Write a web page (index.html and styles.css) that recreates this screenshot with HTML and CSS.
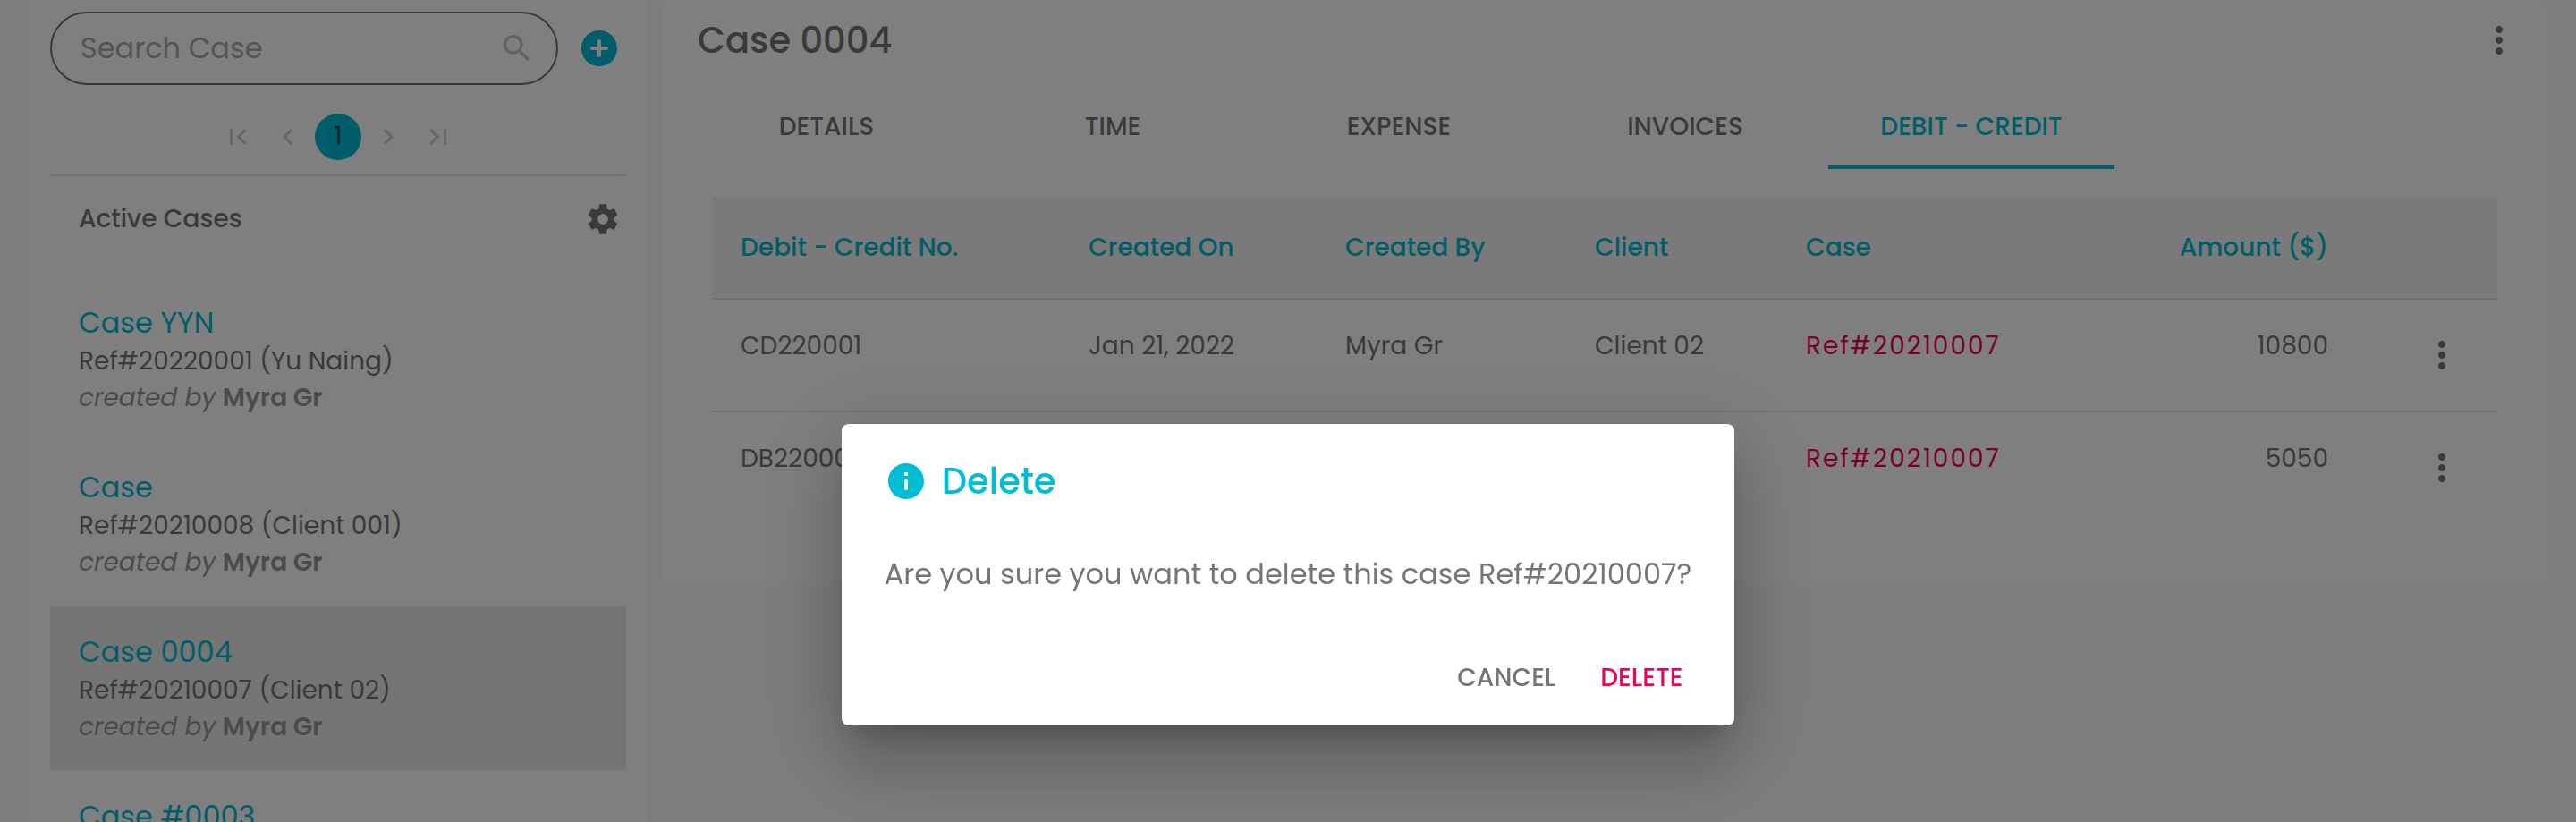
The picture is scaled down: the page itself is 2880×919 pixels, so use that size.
FILE: index.html
```html
<!DOCTYPE html>
<html lang="en">
<head>
<meta charset="utf-8">
<title>Case 0004</title>
<link rel="stylesheet" href="styles.css">
</head>
<body>
<svg class="sprite" aria-hidden="true">
  <symbol id="more" viewBox="0 0 24 24"><path d="M12 8c1.100 0 2-.9 2-2s-.9-2-2-2-2 .9-2 2 .9 2 2 2zm0 2c-1.100 0-2 .9-2 2s.9 2 2 2 2-.9 2-2-.9-2-2-2zm0 6c-1.100 0-2 .9-2 2s.9 2 2 2 2-.9 2-2-.9-2-2-2z"/></symbol>
</svg>
<div class="app">
  <aside class="sidebar">
    <div class="search-row">
      <div class="search">
        <input class="search-input" type="text" placeholder="Search Case" aria-label="Search Case">
        <svg class="icon-m" viewBox="0 0 24 24"><path d="M15.500 14h-.79l-.28-.27c1.200-1.400 1.820-3.310 1.480-5.340-.47-2.780-2.790-5-5.590-5.340-4.230-.52-7.790 3.040-7.270 7.270.34 2.800 2.560 5.120 5.340 5.590 2.030.34 3.940-.28 5.340-1.480l.27.28v.79l4.250 4.250c.41.410 1.080.410 1.490 0 .41-.41.410-1.080 0-1.490L15.500 14zm-6 0C7.010 14 5 11.990 5 9.500S7.010 5 9.500 5 14 7.010 14 9.500 11.990 14 9.500 14z"/></svg>
      </div>
      <button class="icon-button add" aria-label="Add case"><svg class="icon-l" viewBox="0 0 24 24"><path d="M12 2C6.480 2 2 6.480 2 12s4.480 10 10 10 10-4.480 10-10S17.520 2 12 2zm4 11h-3v3c0 .55-.45 1-1 1s-1-.45-1-1v-3H8c-.55 0-1-.45-1-1s.45-1 1-1h3V8c0-.55.45-1 1-1s1 .45 1 1v3h3c.55 0 1 .45 1 1s-.45 1-1 1z"/></svg></button>
    </div>
    <nav class="pagination" aria-label="Pages">
      <button class="page" disabled aria-label="First"><svg class="icon-s" viewBox="0 0 24 24"><path d="M18.410 16.590L13.820 12l4.590-4.590L17 6l-6 6 6 6zM6 6h2v12H6z"/></svg></button>
      <button class="page" disabled aria-label="Previous"><svg class="icon-s" viewBox="0 0 24 24"><path d="M15.410 7.410L14 6l-6 6 6 6 1.410-1.410L10.830 12z"/></svg></button>
      <button class="page current">1</button>
      <button class="page" disabled aria-label="Next"><svg class="icon-s" viewBox="0 0 24 24"><path d="M10 6L8.590 7.410 13.170 12l-4.580 4.590L10 18l6-6z"/></svg></button>
      <button class="page" disabled aria-label="Last"><svg class="icon-s" viewBox="0 0 24 24"><path d="M5.590 7.410L10.180 12l-4.590 4.590L7 18l6-6-6-6zM16 6h2v12h-2z"/></svg></button>
    </nav>
    <div class="list-head">
      <h2 class="list-title">Active Cases</h2>
      <button class="icon-button" aria-label="Settings"><svg class="icon-m" viewBox="0 0 24 24"><path d="M19.440 12.990l-.01.020c.04-.33.080-.67.080-1.010 0-.34-.03-.66-.07-.99l.01.020 2.440-1.920-2.430-4.220-2.870 1.160.01.010c-.52-.4-1.090-.74-1.710-1h.01L14.440 2H9.570l-.44 3.070h.01c-.62.260-1.190.600-1.710 1l.01-.01-2.880-1.170-2.440 4.220 2.440 1.920.01-.02c-.04.330-.07.650-.07.990 0 .34.030.680.080 1.010l-.01-.02-2.100 1.650-.33.260 2.430 4.200 2.880-1.150-.02-.04c.53.410 1.100.750 1.730 1.010h-.03L9.580 22h4.850s.03-.18.060-.42l.38-2.650h-.01c.62-.26 1.200-.6 1.730-1.010l-.02.040 2.880 1.150 2.430-4.200s-.14-.12-.33-.26l-2.110-1.660zM12 15.500c-1.930 0-3.500-1.570-3.500-3.500s1.570-3.500 3.500-3.500 3.500 1.570 3.500 3.500-1.570 3.500-3.500 3.500z"/></svg></button>
    </div>
    <ul class="cases">
      <li class="case"><a class="case-name" href="#">Case YYN</a><p class="case-ref">Ref#20220001 (Yu Naing)</p><p class="case-by"><em>created by</em> <strong>Myra Gr</strong></p></li>
      <li class="case"><a class="case-name" href="#">Case</a><p class="case-ref">Ref#20210008 (Client 001)</p><p class="case-by"><em>created by</em> <strong>Myra Gr</strong></p></li>
      <li class="case selected"><a class="case-name" href="#">Case 0004</a><p class="case-ref">Ref#20210007 (Client 02)</p><p class="case-by"><em>created by</em> <strong>Myra Gr</strong></p></li>
      <li class="case"><a class="case-name" href="#">Case #0003</a></li>
    </ul>
  </aside>
  <main class="panel">
    <header class="panel-head">
      <h1 class="panel-title">Case 0004</h1>
      <button class="icon-button" aria-label="Case menu"><svg class="icon-l"><use href="#more"/></svg></button>
    </header>
    <div class="tabs" role="tablist">
      <button class="tab" role="tab">DETAILS</button>
      <button class="tab" role="tab">TIME</button>
      <button class="tab" role="tab">EXPENSE</button>
      <button class="tab" role="tab">INVOICES</button>
      <button class="tab active" role="tab" aria-selected="true">DEBIT - CREDIT</button>
    </div>
    <div class="table-wrap">
      <table class="table">
        <colgroup><col class="c-no"><col class="c-on"><col class="c-by"><col class="c-client"><col class="c-case"><col class="c-amount"><col class="c-menu"></colgroup>
        <thead>
          <tr><th>Debit - Credit No.</th><th>Created On</th><th>Created By</th><th>Client</th><th>Case</th><th class="num">Amount ($)</th><th></th></tr>
        </thead>
        <tbody>
          <tr><td>CD220001</td><td>Jan 21, 2022</td><td>Myra Gr</td><td>Client 02</td><td><a class="ref-link" href="#">Ref#20210007</a></td><td class="num">10800</td><td class="menu"><button class="icon-button row-menu" aria-label="Row menu"><svg class="icon-l"><use href="#more"/></svg></button></td></tr>
          <tr><td>DB220001</td><td>Jan 21, 2022</td><td>Myra Gr</td><td>Client 02</td><td><a class="ref-link" href="#">Ref#20210007</a></td><td class="num">5050</td><td class="menu"><button class="icon-button row-menu" aria-label="Row menu"><svg class="icon-l"><use href="#more"/></svg></button></td></tr>
        </tbody>
      </table>
    </div>
  </main>
</div>
<div class="overlay">
  <section class="dialog" role="dialog" aria-labelledby="dialog-title">
    <h2 class="dialog-title" id="dialog-title"><svg class="icon-l" viewBox="0 0 24 24"><path d="M12 2C6.480 2 2 6.480 2 12s4.480 10 10 10 10-4.480 10-10S17.520 2 12 2zm0 15c-.55 0-1-.45-1-1v-4c0-.55.45-1 1-1s1 .45 1 1v4c0 .55-.45 1-1 1zm1-8h-2V7h2v2z"/></svg>Delete</h2>
    <p class="dialog-text">Are you sure you want to delete this case Ref#20210007?</p>
    <div class="dialog-actions">
      <button class="text-button">CANCEL</button>
      <button class="text-button danger">DELETE</button>
    </div>
  </section>
</div>
</body>
</html>
```
FILE: styles.css
```css
* { box-sizing: border-box; }

body {
  margin: 0;
  background: #fafafa;
  color: #757575;
  font-family: Poppins, Inter, sans-serif;
  font-size: 28px;
  line-height: 40px;
}

h1, h2, p, ul { margin: 0; padding: 0; }
ul { list-style: none; }
a { text-decoration: none; }
svg { display: block; flex: none; fill: currentColor; }
button { border: 0; padding: 0; background: none; color: inherit; font: inherit; }

.sprite { position: absolute; width: 0; height: 0; }
.icon-s { width: 36px; height: 36px; }
.icon-m { width: 40px; height: 40px; }
.icon-l { width: 48px; height: 48px; }
.icon-button { display: flex; flex: none; }

.app {
  display: flex;
  align-items: flex-start;
  gap: 16px;
  height: 100vh;
  padding: 0 32px;
  overflow: hidden;
}

/* Sidebar */
.sidebar {
  flex: 0 0 25%;
  max-width: 692px;
  height: 100vh;
  overflow: hidden;
  padding: 13px 24px 0;
  background: #fff;
}

.search-row { display: flex; align-items: center; gap: 22px; padding-right: 6px; }
.search {
  display: flex;
  flex: 1;
  align-items: center;
  min-width: 0;
  height: 82px;
  padding: 0 24px 0 32px;
  border: 2px solid #757575;
  border-radius: 41px;
}
.search svg { color: #c4c4c4; }
.search-input {
  flex: 1;
  min-width: 0;
  border: 0;
  padding: 0;
  background: none;
  color: #757575;
  font: inherit;
  font-size: 32px;
  outline: 0;
}
.search-input::placeholder { color: #a8a8a8; opacity: 1; }
.add { color: #00bcd4; }

.pagination {
  display: flex;
  justify-content: center;
  gap: 4px;
  padding: 32px 0 16px;
  border-bottom: 2px solid #e0e0e0;
}
.page {
  display: flex;
  align-items: center;
  justify-content: center;
  width: 52px;
  height: 52px;
  border-radius: 50%;
  color: #cccccc;
}
.page.current { background: #00bcd4; color: #18454b; }

.list-head {
  display: flex;
  align-items: center;
  justify-content: space-between;
  height: 112px;
  padding: 0 6px 16px 32px;
}
.list-title { font-size: 28px; font-weight: 500; }

.case { height: 184px; padding: 32px; }
.case.selected { background: #ebebeb; }
.case-name { display: block; color: #00bcd4; font-size: 32px; }
.case-ref { line-height: 46px; }
.case-by { line-height: 36px; color: #969696; }
.case-by strong { font-weight: 600; }

/* Main panel */
.panel {
  flex: 1;
  min-width: 0;
  padding: 0 24px 64px;
  background: #fff;
  border-radius: 8px;
}
.panel-head {
  display: flex;
  align-items: center;
  justify-content: space-between;
  height: 93px;
  padding: 0 6px 4px 16px;
}
.panel-title { font-size: 40px; font-weight: 500; }

.tabs { display: flex; }
.tab {
  flex: 0 1 320px;
  height: 96px;
  padding-top: 6px;
  border-bottom: 4px solid transparent;
  font-weight: 500;
}
.tab.active { color: #00bcd4; border-bottom-color: #00bcd4; }

.table-wrap { padding: 32px 32px 0; }
.table { width: 100%; border-collapse: separate; border-spacing: 0; table-layout: fixed; }
.c-no { width: 389px; }
.c-on { width: 287px; }
.c-by { width: 279px; }
.c-client { width: 236px; }
.c-menu { width: 157px; }
th {
  height: 114px;
  padding: 0 32px;
  border-bottom: 2px solid #e0e0e0;
  background: #f5f5f5;
  color: #00bcd4;
  font-weight: 500;
  text-align: left;
  white-space: nowrap;
}
td {
  height: 126px;
  padding: 32px;
  border-bottom: 2px solid #e0e0e0;
  vertical-align: top;
  white-space: nowrap;
}
th.num, td.num { text-align: right; }
tbody tr:last-child td { border-bottom: 0; }
.ref-link { color: #f50057; letter-spacing: 2px; }
td.menu { padding-right: 38px; }
.row-menu { align-items: center; height: 60px; margin-left: auto; }

/* Dialog */
.overlay {
  position: fixed;
  inset: 0;
  display: flex;
  align-items: flex-start;
  justify-content: center;
  padding: 474px 32px 0;
  background: rgba(0, 0, 0, 0.5);
}
.dialog {
  max-width: 1200px;
  background: #fff;
  border-radius: 8px;
  box-shadow: 0 22px 30px -14px rgba(0, 0, 0, 0.2), 0 48px 76px 6px rgba(0, 0, 0, 0.14), 0 18px 92px 16px rgba(0, 0, 0, 0.12);
}
.dialog-title {
  display: flex;
  align-items: center;
  gap: 16px;
  padding: 32px 48px;
  color: #00bcd4;
  font-size: 40px;
  font-weight: 500;
  line-height: 64px;
}
.dialog-text { padding: 16px 48px 40px; font-size: 32px; line-height: 48px; }
.dialog-actions { display: flex; justify-content: flex-end; gap: 16px; padding: 16px 40px 17px; }
.text-button { height: 72px; min-width: 128px; padding: 0 16px; font-weight: 500; border-radius: 8px; }
.danger { color: #f50057; }
```
